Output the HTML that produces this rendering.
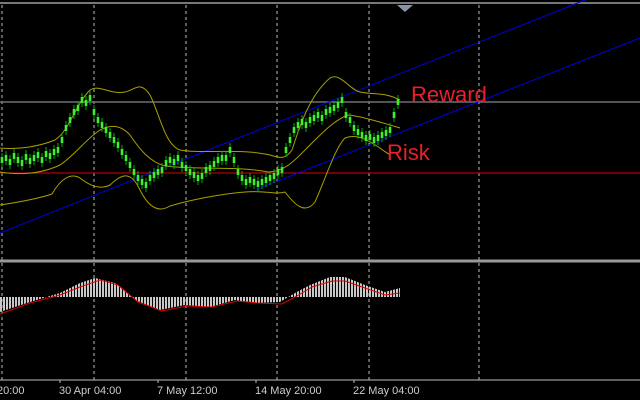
<!DOCTYPE html>
<html><head><meta charset="utf-8"><style>
html,body{margin:0;padding:0;background:#000;width:640px;height:400px;overflow:hidden}
svg{display:block}
text{font-family:"Liberation Sans",sans-serif}
</style></head><body>
<svg width="640" height="400" viewBox="0 0 640 400">
<defs>
<pattern id="hs" width="3" height="10" patternUnits="userSpaceOnUse"><rect width="2" height="10" fill="#c8c8c8"/></pattern>
</defs>
<rect width="640" height="400" fill="#000"/>
<line x1="0" y1="3" x2="640" y2="3" stroke="#777" stroke-width="2"/>
<polygon points="397,5 413,5 405,12" fill="#8a94a8"/>
<g stroke="#bbb" stroke-width="1" stroke-dasharray="3,3">
<line x1="2" y1="5" x2="2" y2="380"/><line x1="94" y1="5" x2="94" y2="380"/><line x1="186" y1="5" x2="186" y2="380"/><line x1="277" y1="5" x2="277" y2="380"/><line x1="369" y1="5" x2="369" y2="380"/><line x1="479" y1="5" x2="479" y2="380"/>
</g>
<line x1="0" y1="102" x2="640" y2="102" stroke="#6a6f78" stroke-width="1.5"/>
<line x1="0" y1="173" x2="640" y2="173" stroke="#e00000" stroke-width="1"/>
<line x1="0" y1="233" x2="585" y2="0" stroke="#0000e0" stroke-width="1"/>
<line x1="255" y1="190" x2="640" y2="38" stroke="#0000e0" stroke-width="1"/>
<g fill="none" stroke="#a8a000" stroke-width="1" stroke-linejoin="round">
<path d="M0,148 C20,150 40,146 55,140 C70,130 75,105 90,90 C100,84 110,95 125,92 C135,90 140,80 150,95 C160,115 165,145 180,150 C200,154 240,148 270,155 C280,158 285,160 292,150 C300,125 310,95 330,78 C340,72 350,90 360,92 C375,95 385,92 400,100"/>
<path d="M0,205 C20,202 40,198 52,194 C60,180 70,172 80,178 C90,186 100,190 110,185 C120,176 130,168 140,190 C150,210 160,212 170,206 C190,200 220,194 245,192 C265,190 275,195 285,192 C295,205 305,215 315,202 C325,180 335,148 345,138 C360,132 375,145 390,155"/>
<path d="M0,172 C25,176 45,172 60,165 C75,155 85,140 100,130 C110,125 120,124 130,135 C140,150 150,162 165,166 C195,170 240,166 268,172 C285,172 295,160 310,145 C325,130 335,120 348,115 C360,116 380,122 400,128"/>
</g>
<path fill="none" stroke="#00b000" stroke-width="1" d="M2 153V167M6 151V165M10 155V169M14 149V163M18 153V167M22 156V170M26 150V164M30 154V168M34 151V165M38 148V162M42 153V167M46 147V161M50 149V163M54 145V159M58 143V157M62 133V147M66 121V135M70 113V127M74 105V119M78 101V115M82 93V107M86 96V110M90 91V105M94 105V119M98 113V127M102 118V132M106 123V137M110 128V142M114 133V147M118 138V152M122 145V159M126 151V165M130 158V172M134 165V179M138 171V185M142 175V189M146 178V192M150 171V185M154 168V182M158 165V179M162 163V177M166 156V170M170 153V167M174 155V169M178 151V165M182 158V172M186 161V175M190 165V179M194 168V182M198 171V185M202 169V183M206 163V177M210 161V175M214 157V171M218 153V167M222 151V165M226 151V165M230 143V157M234 153V167M238 165V179M242 171V185M246 175V189M250 173V187M254 175V189M258 177V191M262 175V189M266 173V187M270 171V185M274 169V183M278 165V179M282 163V177M286 143V157M290 133V147M294 123V137M298 118V132M302 115V129M306 118V132M310 113V127M314 111V125M318 108V122M322 111V125M326 105V119M330 103V117M334 101V115M338 98V112M342 93V107M346 108V122M350 113V127M354 121V135M358 125V139M362 128V142M366 131V145M370 130V144M374 133V147M378 131V145M382 128V142M386 126V140M390 123V137M394 108V122M398 95V109"/>
<path fill="none" stroke="#40ee30" stroke-width="2.6" d="M2 157V163M6 155V161M10 159V165M14 153V159M18 157V163M22 160V166M26 154V160M30 158V164M34 155V161M38 152V158M42 157V163M46 151V157M50 153V159M54 149V155M58 147V153M62 137V143M66 125V131M70 117V123M74 109V115M78 105V111M82 97V103M86 100V106M90 95V101M94 109V115M98 117V123M102 122V128M106 127V133M110 132V138M114 137V143M118 142V148M122 149V155M126 155V161M130 162V168M134 169V175M138 175V181M142 179V185M146 182V188M150 175V181M154 172V178M158 169V175M162 167V173M166 160V166M170 157V163M174 159V165M178 155V161M182 162V168M186 165V171M190 169V175M194 172V178M198 175V181M202 173V179M206 167V173M210 165V171M214 161V167M218 157V163M222 155V161M226 155V161M230 147V153M234 157V163M238 169V175M242 175V181M246 179V185M250 177V183M254 179V185M258 181V187M262 179V185M266 177V183M270 175V181M274 173V179M278 169V175M282 167V173M286 147V153M290 137V143M294 127V133M298 122V128M302 119V125M306 122V128M310 117V123M314 115V121M318 112V118M322 115V121M326 109V115M330 107V113M334 105V111M338 102V108M342 97V103M346 112V118M350 117V123M354 125V131M358 129V135M362 132V138M366 135V141M370 134V140M374 137V143M378 135V141M382 132V138M386 130V136M390 127V133M394 112V118M398 99V105"/>
<text x="411" y="102" font-size="22" fill="#e8202a">Reward</text>
<text x="387" y="160" font-size="22" fill="#e8202a">Risk</text>
<line x1="0" y1="261" x2="640" y2="261" stroke="#999" stroke-width="3"/>
<polygon fill="url(#hs)" points="0,297 0,312 30,302 60,293 80,283 95,278 115,283 135,300 160,310 185,305 210,307 235,300 255,303 280,302 295,293 310,285 330,277 345,277 365,285 385,292 400,288 400,297"/>
<polyline fill="none" stroke="#e00000" stroke-width="1" points="0,314 30,303 60,295 80,287 100,280 118,285 138,302 162,311 187,306 212,307 237,301 257,303 282,304 297,296 312,287 332,281 345,281 365,288 385,295 400,293"/>
<line x1="0" y1="380" x2="640" y2="380" stroke="#bbb" stroke-width="1"/>
<g stroke="#bbb"><line x1="60" y1="380" x2="60" y2="383"/><line x1="158" y1="380" x2="158" y2="383"/><line x1="256" y1="380" x2="256" y2="383"/><line x1="354" y1="380" x2="354" y2="383"/></g>
<g font-size="11" fill="#ccc">
<text x="-3" y="394">20:00</text><text x="59" y="394">30 Apr 04:00</text><text x="157" y="394">7 May 12:00</text><text x="255" y="394">14 May 20:00</text><text x="353" y="394">22 May 04:00</text>
</g>
</svg>
</body></html>
